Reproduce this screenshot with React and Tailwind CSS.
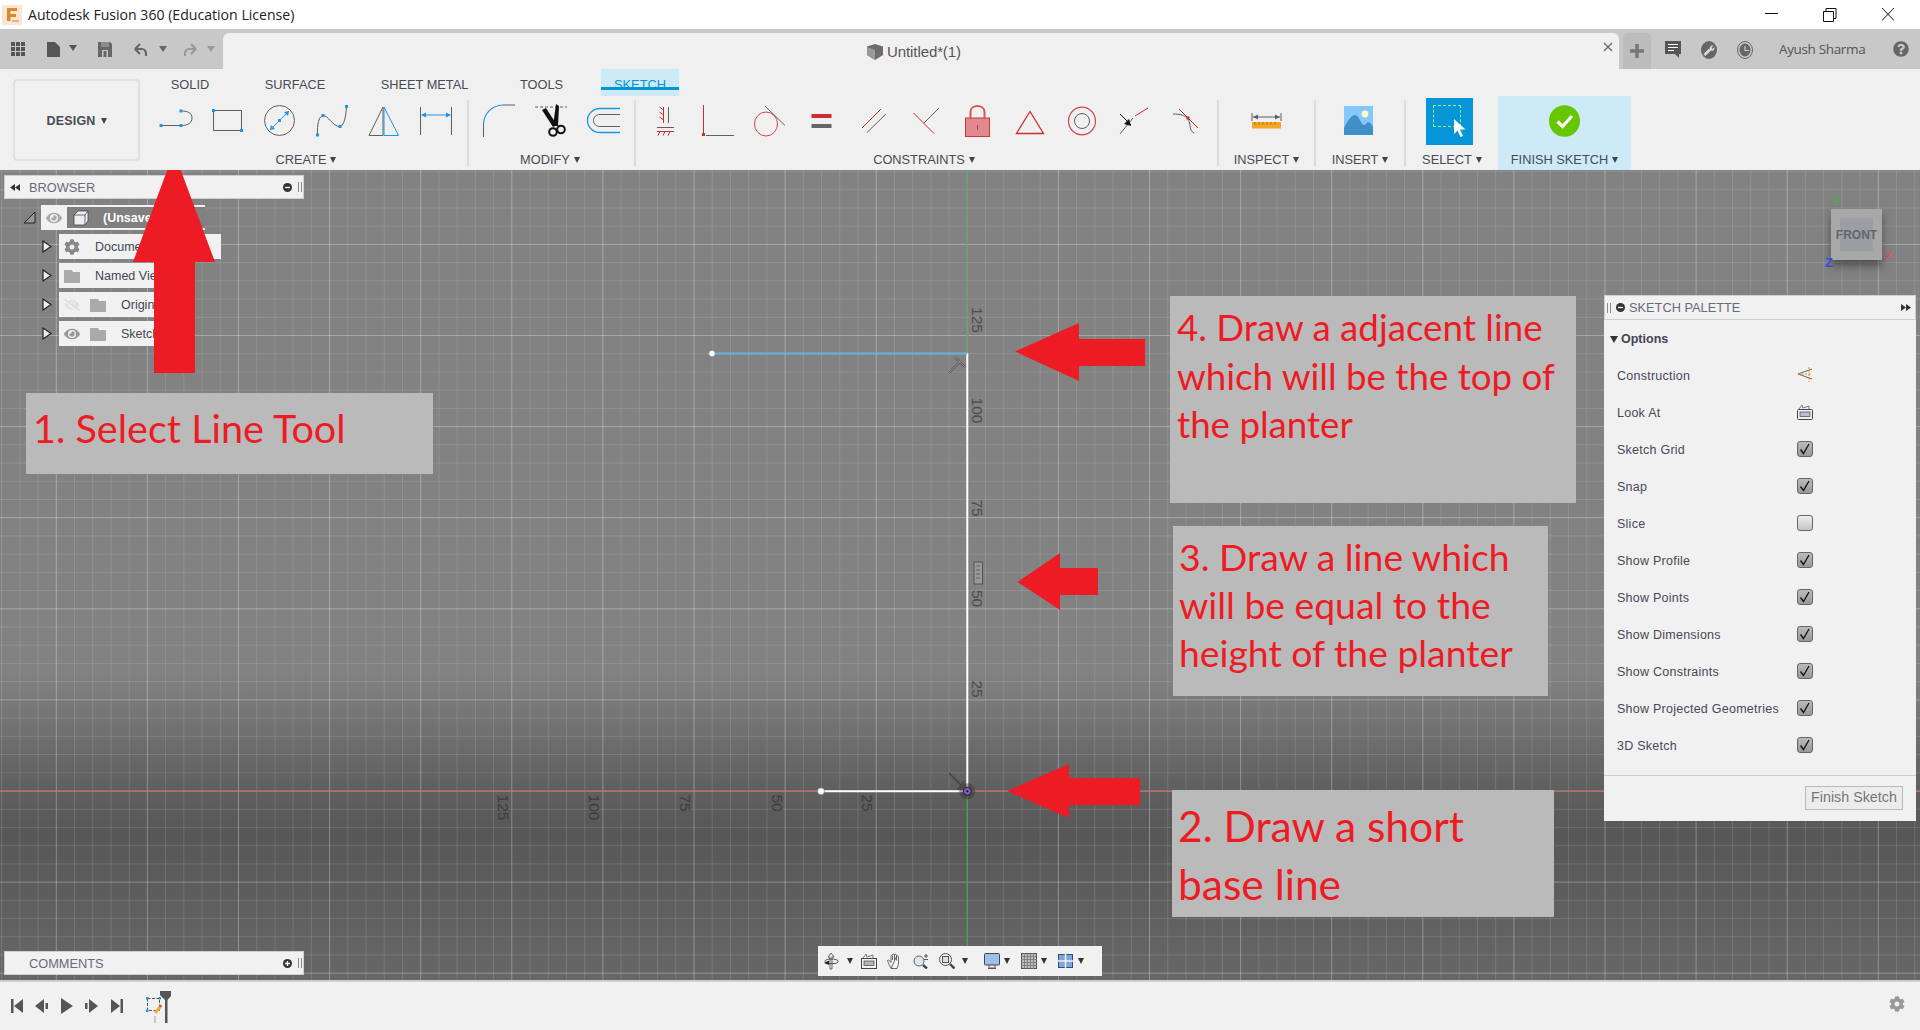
import React from "react";
import { FaCog, FaEye, FaEyeSlash, FaQuestionCircle } from "react-icons/fa";

const RED = "#ed1c24";
const BLUE = "#1e96e6";
const G = "#5f5f5f";
const CR = "#cc2d33";

const Tri = ({ c = "border-t-[#444]" }) => (
  <span className={`inline-block w-0 h-0 border-x-[3.5px] border-x-transparent border-t-[6px] ${c}`} />
);

const Sq = ({ x, y }) => <rect x={x - 1.5} y={y - 1.5} width="3" height="3" fill={BLUE} />;

const Slot = ({ x, w = 52, children }) => (
  <svg width={w} height="44" viewBox={`${x} 96 ${w} 44`} className="shrink-0" fill="none">
    {children}
  </svg>
);

const CreateIcons = () => (
  <>
    <Slot x={150}>
      <path d="M161 125.5H181" stroke={G} />
      <path d="M181 111C188 111 192 113 192 118C192 123 188 125.5 181 125.5" stroke={G} />
      <Sq x={161} y={125.5} /><Sq x={181} y={125.5} /><Sq x={181} y={111} />
    </Slot>
    <Slot x={202}>
      <rect x="213.5" y="110.5" width="28" height="20" stroke={G} />
      <Sq x={213.5} y={110.5} /><Sq x={241.5} y={130.5} />
    </Slot>
    <Slot x={254}>
      <ellipse cx="279.5" cy="120.5" rx="15" ry="15" stroke={G} />
      <path d="M270 130L289 111" stroke={BLUE} />
      <path d="M289 111l-5 1l4 4zM270 130l5-1l-4-4z" fill={BLUE} />
      <Sq x={279.5} y={120.5} />
    </Slot>
    <Slot x={306}>
      <path d="M317.5 135C317 124 319 116 323 115.5C328 115 333 127 340 126.5C344 126 346 116 346.5 107" stroke={G} />
      <Sq x={317.5} y={135} /><Sq x={323} y={115.5} /><Sq x={340} y={126.5} /><Sq x={346.5} y={106.5} />
    </Slot>
    <Slot x={358}>
      <path d="M383 107L369 135.5H383Z" stroke={G} />
      <path d="M384 107V135.5H398.5Z" stroke={BLUE} />
    </Slot>
    <Slot x={410}>
      <path d="M420.5 107V135M451.5 107V135" stroke={G} />
      <path d="M422 115H450" stroke={BLUE} />
      <path d="M421 115l5-2.5v5zM451 115l-5-2.5v5z" fill={BLUE} />
    </Slot>
  </>
);

const ModifyIcons = () => (
  <>
    <Slot x={473}>
      <path d="M483.5 124C484 113 492 105.5 503 105" stroke={BLUE} strokeWidth="1.2" />
      <path d="M503 105H515M483.5 124V137" stroke={G} />
    </Slot>
    <Slot x={525}>
      <path d="M535 107H567" stroke={G} strokeDasharray="3 2" />
      <path d="M542 110L553 127L557 125L546 108Z" fill="#111" />
      <path d="M556 104L559 106L558 126L553 126Z" fill="#111" />
      <circle cx="553" cy="132" r="3.8" stroke="#111" strokeWidth="2" />
      <circle cx="561" cy="129.5" r="3.8" stroke="#111" strokeWidth="2" />
    </Slot>
    <Slot x={577}>
      <path d="M620 108.5H600C593 108.5 587.5 114 587.5 120.5C587.5 127 593 132.5 600 132.5H620" stroke={BLUE} strokeWidth="1.3" />
      <path d="M620 114.5H600C596 114.5 593.5 117 593.5 120.5C593.5 124 596 126.5 600 126.5H620" stroke={G} />
    </Slot>
  </>
);

const ConstraintIcons = () => (
  <>
    <Slot x={639}>
      <path d="M668.5 107V123" stroke={G} />
      <path d="M663.5 107V123M663.5 110l-4-3M663.5 115l-4-3M663.5 120l-4-3" stroke={CR} />
      <path d="M657 127.5H674" stroke={G} />
      <path d="M657 131.5H674M660 131.5l-2 4M665 131.5l-2 4M670 131.5l-2 4" stroke={CR} />
    </Slot>
    <Slot x={691}>
      <path d="M703.5 105V134" stroke={CR} />
      <rect x="702" y="133" width="3" height="3" fill={CR} />
      <path d="M706 135.5H734" stroke={G} />
    </Slot>
    <Slot x={743}>
      <ellipse cx="766" cy="124" rx="11.5" ry="12" stroke="#d6474c" />
      <path d="M765 106L785 125.5" stroke={G} />
    </Slot>
    <Slot x={795}>
      <rect x="811.5" y="114" width="20" height="4" fill={CR} />
      <rect x="811.5" y="124" width="20" height="4" fill="#666" />
    </Slot>
    <Slot x={847}>
      <path d="M862 128L881 109" stroke={CR} />
      <path d="M867 132.5L886 114" stroke={G} />
    </Slot>
    <Slot x={899}>
      <path d="M913.5 113L934 133.5" stroke={CR} />
      <path d="M924 123L939 108" stroke={G} />
    </Slot>
    <Slot x={951}>
      <path d="M970.5 118V112C970.5 104 984.5 104 984.5 112V118" stroke="#d0585d" strokeWidth="2" />
      <rect x="965.5" y="118" width="24" height="18.5" fill="#e08a8f" stroke="#c9383e" />
      <path d="M977.5 125V130" stroke="#c9383e" />
    </Slot>
    <Slot x={1003}>
      <path d="M1030 111.5L1016.5 133.5H1043.5Z" stroke={CR} strokeWidth="1.3" />
    </Slot>
    <Slot x={1055}>
      <ellipse cx="1082" cy="121" rx="13.5" ry="13.8" stroke="#d6474c" strokeWidth="1.2" />
      <circle cx="1082" cy="121" r="7.5" stroke={G} />
    </Slot>
    <Slot x={1107}>
      <path d="M1120 134L1133 118" stroke={G} />
      <path d="M1135 116L1148 108" stroke={CR} />
      <path d="M1120 114L1131 125" stroke="#111" />
      <path d="M1131 126l-7-2l5-5z" fill="#111" />
    </Slot>
    <Slot x={1159}>
      <path d="M1179 109L1198 128" stroke={CR} />
      <path d="M1173 114C1180 114 1185 115 1188 119C1191 124 1189 131 1194 133" stroke={G} />
      <rect x="1186.5" y="116.5" width="3" height="3" fill={CR} />
    </Slot>
  </>
);

const Sep = () => <div className="w-[2px] my-[4px] bg-[#dcdcdc] shrink-0" />;

const Label = ({ t, cls = "" }) => (
  <div className={`h-[30px] pt-[10px] flex items-center justify-center gap-[4px] text-[12.8px] text-[#4a4a55] ${cls}`}>
    <span>{t}</span>
    <Tri />
  </div>
);

const Ribbon = () => (
  <div className="h-[101px] flex bg-[#f0f0f0] font-['Liberation_Sans',sans-serif] shrink-0">
    <div className="w-[150px] shrink-0 pl-[13px] pt-[10px]">
      <div className="w-[127px] h-[82px] pt-[2px] rounded-[4px] border-2 border-[#e0e0e0] flex items-center justify-center gap-[5px] text-[12.5px] font-bold text-[#4a4a55] tracking-[0.2px]">
        <span>DESIGN</span>
        <Tri />
      </div>
    </div>
    <div className="flex flex-col flex-1">
      <div className="h-[27px] flex text-[12.8px] text-[#4a4a55] shrink-0">
        <div className="w-[80px] pt-[6px] text-center">SOLID</div>
        <div className="w-[130px] pt-[6px] text-center">SURFACE</div>
        <div className="w-[129px] pt-[6px] text-center">SHEET METAL</div>
        <div className="w-[105px] pt-[6px] text-center">TOOLS</div>
        <div className="ml-[7px] w-[78px] h-[27px] pt-[6px] text-center bg-[#cdeaf7] text-[#0696d7] relative">
          SKETCH
          <div className="absolute left-0 right-0 top-[18px] h-[3px] bg-[#0696d7]" />
        </div>
      </div>
      <div className="flex flex-1">
        <div className="w-[317px] shrink-0">
          <div className="flex h-[44px]"><CreateIcons /></div>
          <Label t="CREATE" cls="pr-[5px]" />
        </div>
        <Sep />
        <div className="w-[165px] shrink-0">
          <div className="flex h-[44px] pl-[4px]"><ModifyIcons /></div>
          <Label t="MODIFY" cls="pr-[3px]" />
        </div>
        <Sep />
        <div className="w-[581px] shrink-0">
          <div className="flex h-[44px] pl-[3px]"><ConstraintIcons /></div>
          <Label t="CONSTRAINTS" cls="pr-[5px]" />
        </div>
        <Sep />
        <div className="w-[95px] shrink-0">
          <div className="flex h-[44px] justify-center">
            <Slot x={1241}>
              <path d="M1252 113V121M1281 113V121M1253 117H1280" stroke={G} />
              <path d="M1253 117l5-2.5v5zM1280 117l-5-2.5v5z" fill={G} />
              <rect x="1252" y="122" width="29" height="6.5" fill="#f5a623" />
              <path d="M1255 122v3M1259 122v3M1263 122v3M1267 122v3M1271 122v3M1275 122v3" stroke="#8a6512" strokeWidth="0.7" />
            </Slot>
          </div>
          <Label t="INSPECT" />
        </div>
        <Sep />
        <div className="w-[88px] shrink-0">
          <div className="flex h-[44px] justify-center">
            <Slot x={1334}>
              <rect x="1344" y="106" width="29" height="29" fill="#85c8fb" />
              <path d="M1344 128C1348 120 1352 115 1355 115C1359 115 1361 125 1364 125C1366 125 1367 122 1368 122C1370 122 1372 125 1373 127V135H1344Z" fill="#3f90c9" />
              <circle cx="1365" cy="114" r="3.4" fill="#ffffc8" />
            </Slot>
          </div>
          <Label t="INSERT" />
        </div>
        <Sep />
        <div className="w-[92px] shrink-0">
          <div className="flex h-[44px] justify-center pt-[2px] pr-[5px]">
            <div className="w-[47px] h-[47px] bg-[#0696d7] relative shrink-0">
              <div className="absolute left-[7px] top-[7px] w-[28px] h-[22px] border border-dashed border-[#a6e67a]" />
              <svg className="absolute left-[27px] top-[20px]" width="14" height="20" viewBox="0 0 14 20">
                <path d="M1 1V16L4.5 12.5L7.5 19L10 18L7 11.5L12.5 11.5Z" fill="#fff" />
              </svg>
            </div>
          </div>
          <Label t="SELECT" />
        </div>
        <div className="w-[133px] shrink-0 bg-[#cdeaf7]">
          <div className="flex h-[44px] justify-center">
            <Slot x={1539}>
              <ellipse cx="1564.5" cy="121" rx="15.5" ry="15.8" fill="#66c600" />
              <path d="M1557.5 121.5L1562.5 126.5L1572 116" stroke="#fff" strokeWidth="3.2" />
            </Slot>
          </div>
          <Label t="FINISH SKETCH" />
        </div>
      </div>
    </div>
  </div>
);

const TitleBar = () => (
  <div className="h-[29px] bg-white flex items-center shrink-0 relative">
    <svg className="ml-[2px]" width="20" height="20" viewBox="0 0 20 20">
      <rect width="20" height="20" fill="#fbe6d2" />
      <path d="M5 3H15V6H8.5V9H14V12H8.5V16H5Z" fill="#d8882f" />
      <rect x="10" y="15" width="7" height="2" fill="#eeb27b" />
    </svg>
    <span className="ml-[6px] text-[14.1px] text-[#222] font-['Open_Sans',sans-serif]">Autodesk Fusion 360 (Education License)</span>
    <div className="ml-auto flex items-center mr-[4px]">
      <svg width="58" height="29" viewBox="0 0 58 29"><path d="M23 13.5H36" stroke="#111" /></svg>
      <svg width="58" height="29" viewBox="0 0 58 29"><path d="M23.5 11.5H33.5V21.5H23.5ZM26 11V8.5H36V18.5H34" stroke="#111" fill="none" /></svg>
      <svg width="58" height="29" viewBox="0 0 58 29"><path d="M24 8L36 20.500M36 8L24 20.500" stroke="#111" fill="none" /></svg>
    </div>
  </div>
);

const TabStrip = () => (
  <div className="h-[40px] bg-[#c8c8c8] flex shrink-0 font-['Liberation_Sans',sans-serif]">
    <div className="w-[223px] flex items-center shrink-0">
      <svg width="223" height="40" viewBox="0 29 223 40" fill="none">
        <g fill="#555">
          {[0, 1, 2].map((r) => [0, 1, 2].map((c) => <rect key={`${r}${c}`} x={11 + c * 5} y={42 + r * 5} width="4" height="4" />))}
          <path d="M47 42H55L60 47V57H47Z" />
          <path d="M69 45H77L73 51Z" />
          <path d="M98 42H110L112 44V57H98Z" fill="#666" />
          <rect x="101" y="42" width="8" height="5" fill="#8c8c8c" />
          <rect x="102" y="50" width="6" height="7" fill="#c8c8c8" />
          <rect x="103.500" y="51" width="3" height="6" fill="#666" />
          <path d="M159 46H167L163 52Z" fill="#666" />
          <path d="M207 46H215L211 52Z" fill="#999" />
        </g>
        <path d="M135 49L140 44M135 49L140 54M135 49H142C145 49 146.500 52 146 56" stroke="#666" strokeWidth="2.2" />
        <path d="M196 49L191 44M196 49L191 54M196 49H189C186 49 184.500 52 185 56" stroke="#999" strokeWidth="2.2" />
      </svg>
    </div>
    <div className="w-[1396px] mt-[4px] bg-[#f0f0f0] rounded-t-[6px] relative flex justify-center items-center shrink-0">
      <div className="flex items-center gap-[4px] mr-[14px] mt-[1px]">
        <svg width="16" height="16" viewBox="0 0 16 16">
          <path d="M8 0L16 2.500V11L8 16L0 11V2.500Z" fill="#6c6c6c" />
          <path d="M0 3L8 6V16L0 11Z" fill="#9a9a9a" />
        </svg>
        <span className="text-[15px] leading-[18px] text-[#555] tracking-[-0.1px]">Untitled*(1)</span>
      </div>
      <svg className="absolute left-[1380px] top-[9px]" width="10" height="10" viewBox="0 0 10 10"><path d="M1 1L9 9M9 1L1 9" stroke="#666" strokeWidth="1.3" /></svg>
    </div>
    <div className="ml-[4px] mt-[4px] w-[28px] bg-[#bcbcbc] rounded-t-[5px] flex items-center justify-center shrink-0">
      <svg width="14" height="14" viewBox="0 0 14 14"><path d="M7 0V14M0 7H14" stroke="#777" strokeWidth="3.5" /></svg>
    </div>
    <svg className="ml-[14px] mt-[12px]" width="16" height="18" viewBox="0 0 16 18">
      <path d="M0 0H16V13H14V17L10 13H0Z" fill="#555" />
      <path d="M3 3.500H13M3 6.500H13M3 9.500H9" stroke="#fff" strokeWidth="1.2" />
    </svg>
    <svg className="ml-[20px] mt-[12px]" width="16" height="18" viewBox="0 0 16 18" fill="none">
      <ellipse cx="8" cy="9" rx="8" ry="9" fill="#666" />
      <path d="M3.500 14L9 8.500" stroke="#ddd" strokeWidth="2.6" />
      <path d="M9 9C8 6 10 4 12.500 4.500L10.500 6.800L11.500 8L13.500 6C14 9 11.500 11 9 9Z" fill="#ddd" />
    </svg>
    <svg className="ml-[20px] mt-[12px]" width="16" height="18" viewBox="0 0 16 18" fill="none">
      <ellipse cx="8" cy="9" rx="7.500" ry="8.500" stroke="#666" />
      <ellipse cx="8" cy="9" rx="5.500" ry="6.500" fill="#666" />
      <path d="M8 5V9.500H12" stroke="#ccc" strokeWidth="1.2" />
    </svg>
    <span className="ml-[26px] mt-[12px] w-[86px] text-[13.5px] leading-[16px] whitespace-nowrap text-[#555] font-['Open_Sans',sans-serif] tracking-[-0.35px]">Ayush Sharma</span>
    <FaQuestionCircle className="ml-[28px] mt-[12px] text-[#666]" size={16} />
  </div>
);

const Canvas = () => {
  const cx = 967.3, cy = 791, st = 18.22;
  const xs = [], ys = [];
  for (let i = -54; i < 54; i++) xs.push(i);
  for (let i = -34; i < 12; i++) ys.push(i);
  const labelV = [["125", 320], ["100", 410.5], ["75", 508], ["50", 598.500], ["25", 689]];
  const labelH = [["125", 498], ["100", 588.500], ["75", 680], ["50", 771.500], ["25", 861.500]];
  return (
    <svg className="absolute inset-0" width="1920" height="810" viewBox="0 170 1920 810" fill="none">
      {xs.map((i) => (
        <line key={`x${i}`} x1={cx + i * st} x2={cx + i * st} y1="170" y2="980"
          stroke="#fff" strokeOpacity={i % 5 === 0 ? 0.3 : 0.13} />
      ))}
      {ys.map((i) => (
        <line key={`y${i}`} y1={cy + i * st} y2={cy + i * st} x1="0" x2="1920"
          stroke="#fff" strokeOpacity={i % 5 === 0 ? 0.3 : 0.13} />
      ))}
      <line x1="0" x2="1920" y1="791.3" y2="791.3" stroke="#cf6a6a" />
      <line x1="967.3" x2="967.3" y1="170" y2="353" stroke="#4fae4f" />
      <line x1="967.3" x2="967.3" y1="791" y2="980" stroke="#2fb52f" />
      <line x1="967.3" x2="967.3" y1="353" y2="791" stroke="#fff" strokeWidth="2" />
      <line x1="712" x2="967.3" y1="353.500" y2="353.500" stroke="#63b5dc" strokeWidth="2" />
      <line x1="821" x2="967.3" y1="791.3" y2="791.3" stroke="#fff" strokeWidth="2" />
      <circle cx="712" cy="353.500" r="3.300" fill="#fff" stroke="#666" strokeWidth="0.6" />
      <circle cx="821" cy="791.300" r="3.500" fill="#fff" stroke="#666" strokeWidth="0.6" />
      <circle cx="967.300" cy="791.300" r="8" fill="#333" fillOpacity="0.45" />
      <circle cx="967.300" cy="791.300" r="4" fill="#7a5cc4" stroke="#222" />
      <circle cx="967.300" cy="791.300" r="1" fill="#111" />
      <path d="M949 373L960 361.500M955 357.500L965 367" stroke="#555" strokeWidth="2.200" />
      <path d="M949 373L960 361.500M955 357.500L965 367" stroke="#aaa" strokeWidth="0.800" />
      <path d="M949 773L962 786M958 790L964 781" stroke="#444" strokeWidth="1.500" />
      <rect x="974" y="562" width="8.500" height="22" fill="#999" stroke="#555" />
      <path d="M976 566h4M976 570h4M976 574h4M976 578h4" stroke="#555" strokeWidth="0.800" />
      {labelV.map(([t, y]) => (
        <text key={t} transform={`translate(972 ${y}) rotate(90)`} textAnchor="middle" fontSize="15.500"
          fontFamily="'Liberation Sans',sans-serif" fill="#4c4c4c">{t}</text>
      ))}
      {labelH.map(([t, x]) => (
        <text key={t} transform={`translate(${x} ${t.length === 3 ? 807.5 : 803}) rotate(90)`} textAnchor="middle" fontSize="15.500"
          fontFamily="'Liberation Sans',sans-serif" fill="#3c3c3c">{t}</text>
      ))}
      <path d="M1015 351.500L1079 323V339H1145V366H1079V381Z" fill={RED} />
      <path d="M1017.500 582L1060 553V568H1098V595H1060V610Z" fill={RED} />
      <path d="M1007 791L1069 764V778H1140V805H1069V818Z" fill={RED} />
    </svg>
  );
};

const ViewCube = () => (
  <div className="absolute left-[1825px] top-[22px] w-[75px] h-[90px]">
    <div className="absolute left-[6px] top-[17px] w-[51px] h-[51px] bg-[#a8a8a8] shadow-[0_6px_8px_rgba(40,40,40,0.55)]">
      <div className="mx-[9px] my-[9px] w-[33px] h-[33px] bg-[#9b9ea3] flex items-center justify-center text-[12px] font-bold text-[#666] font-['Liberation_Sans',sans-serif] whitespace-nowrap">
        FRONT
      </div>
    </div>
    <span className="absolute left-[7px] top-[2px] text-[12px] leading-[14px] text-[#3fb53f] font-['Liberation_Sans',sans-serif]">Y</span>
    <span className="absolute left-0 top-[64px] text-[13px] leading-[14px] font-bold text-[#3a4ae0] font-['Liberation_Sans',sans-serif]">Z</span>
    <span className="absolute left-[60px] top-[57px] text-[12px] leading-[14px] text-[#e05050] font-['Liberation_Sans',sans-serif]">X</span>
  </div>
);

const PanelHead = ({ left, t, right, cls }) => (
  <div className={`h-[24px] bg-[#f1f1f1] border border-[#cfcfcf] flex items-center font-['Liberation_Sans',sans-serif] text-[12.8px] text-[#6a6a7a] ${cls}`}>
    {left}
    <span className="pt-[1px]">{t}</span>
    {right}
  </div>
);

const Rew = ({ flip }) => (
  <svg width="10" height="7" viewBox="0 0 10 7" className={flip ? "rotate-180" : ""}><path d="M5 0V7L0 3.500ZM10 0V7L5 3.500Z" fill="#333" /></svg>
);

const Round = ({ plus }) => (
  <svg width="9" height="9" viewBox="0 0 9 9">
    <circle cx="4.500" cy="4.500" r="4.500" fill="#333" />
    <path d={plus ? "M2 4.500H7M4.500 2V7" : "M2 4.500H7"} stroke="#fff" strokeWidth="1.300" />
  </svg>
);

const Grip = () => <div className="w-[4px] h-[10px] border-x border-[#888]" />;

const Folder = () => (
  <svg width="16" height="13" viewBox="0 0 16 13"><path d="M0 0H8L9 2H16V13H0Z" fill="#aaa" /></svg>
);

const Expand = () => (
  <svg width="10" height="13" viewBox="0 0 10 13"><path d="M1 1L9 6.500L1 12Z" fill="#eee" stroke="#222" strokeWidth="1.200" /></svg>
);

const TreeRow = ({ w, children }) => (
  <div className="flex items-center h-[25px] mb-[4px]">
    <div className="w-[18px] pl-[1px] flex items-center"><Expand /></div>
    <div className={`h-[25px] pt-[1px] bg-[#f1f1f1] flex items-center text-[12.5px] text-[#444455] ${w}`}>{children}</div>
  </div>
);

const Browser = () => (
  <div className="absolute left-[4px] top-[5px] w-[300px] font-['Liberation_Sans',sans-serif]">
    <PanelHead
      t="BROWSER"
      left={<div className="w-[24px] pl-[5px] flex"><Rew /></div>}
      right={<div className="ml-auto flex items-center gap-[6px] pr-[1px]"><Round /><Grip /></div>}
    />
    <div className="mt-[6px] pl-[19px]">
      <div className="flex items-center h-[25px] mb-[4px]">
        <svg width="18" height="13" viewBox="0 0 18 13"><path d="M1 12L12 1V12Z" fill="#999" stroke="#222" /></svg>
        <div className="h-[25px] w-[164px] bg-[#f1f1f1] flex items-center">
          <FaEye className="ml-[5px] text-[#aaa]" size={16} />
          <div className="ml-[5px] flex-1 h-[21px] pt-[1px] bg-[#808080] flex items-center pl-[6px] text-[12.5px] font-bold text-white">
            <svg width="16" height="16" viewBox="0 0 16 16" className="mr-[14px]"><path d="M1 5H12V15H1ZM1 5L5 1H15V11L12 15M12 5L15 1" fill="#eceef4" stroke="#444" strokeWidth="0.800" /></svg>
            (Unsaved)
          </div>
        </div>
      </div>
      <div className="pl-[18px]">
        <TreeRow w="w-[162px]">
          <FaCog className="ml-[5px] mr-[15px] text-[#888]" size={16} /><span>Document Settings</span>
        </TreeRow>
        <TreeRow w="w-[128px]">
          <span className="ml-[5px] mr-[15px]"><Folder /></span><span>Named Views</span>
        </TreeRow>
        <TreeRow w="w-[118px]">
          <FaEyeSlash className="ml-[5px] text-[#ddd]" size={16} /><span className="ml-[10px] mr-[15px]"><Folder /></span><span>Origin</span>
        </TreeRow>
        <TreeRow w="w-[118px]">
          <FaEye className="ml-[5px] text-[#999]" size={16} /><span className="ml-[10px] mr-[15px]"><Folder /></span><span>Sketches</span>
        </TreeRow>
      </div>
    </div>
  </div>
);

const Check = ({ on }) => (
  <div className={`w-[16px] h-[16px] rounded-[3px] border border-[#666] ${on ? "bg-[linear-gradient(#bbb,#999)]" : "bg-[linear-gradient(#eee,#c4c4c4)]"}`}>
    {on && (
      <svg width="14" height="14" viewBox="0 0 14 14" fill="none">
        <path d="M2.500 7.500L5.500 11.500L11 2" stroke="#111" strokeWidth="1.300" />
      </svg>
    )}
  </div>
);

const PalRow = ({ t, children }) => (
  <div className="h-[37px] flex items-center pl-[13px] text-[12.5px] tracking-[0.25px] text-[#484858]">
    <span className="w-[180px] pt-[1px]">{t}</span>
    <div className="w-[16px] flex justify-center -mt-[2px]">{children}</div>
  </div>
);

const Palette = () => (
  <div className="absolute left-[1604px] top-[125px] w-[312px] h-[526px] bg-[#f1f1f1] font-['Liberation_Sans',sans-serif] flex flex-col">
    <PanelHead
      t="SKETCH PALETTE"
      cls="h-[25px]"
      left={<div className="flex items-center gap-[5px] pl-[2px] pr-[4px]"><Grip /><Round /></div>}
      right={<div className="ml-auto pr-[4px]"><Rew flip /></div>}
    />
    <div className="h-[37px] pt-[2px] flex items-center pl-[6px] gap-[3px] text-[12.5px] font-bold text-[#444455]">
      <span className="inline-block w-0 h-0 border-x-[4.5px] border-x-transparent border-t-[7px] border-t-[#333]" />
      Options
    </div>
    <PalRow t="Construction">
      <svg width="16" height="16" viewBox="0 0 16 16" fill="none">
        <path d="M1 7L15 2M1 7L15 12" stroke="#666" />
        <path d="M1 7H15M12 0V15" stroke="#f08a00" strokeDasharray="2 1.500" />
      </svg>
    </PalRow>
    <PalRow t="Look At">
      <svg width="16" height="16" viewBox="0 0 16 16" fill="none">
        <rect x="0.500" y="5.500" width="15" height="10" rx="1" stroke="#444" />
        <rect x="3" y="8" width="10" height="4.500" fill="#b8c2d4" stroke="#444" strokeWidth="0.700" />
        <path d="M2 5L5 1L6 4L12 2V5" stroke="#777" />
      </svg>
    </PalRow>
    <PalRow t="Sketch Grid"><Check on /></PalRow>
    <PalRow t="Snap"><Check on /></PalRow>
    <PalRow t="Slice"><Check /></PalRow>
    <PalRow t="Show Profile"><Check on /></PalRow>
    <PalRow t="Show Points"><Check on /></PalRow>
    <PalRow t="Show Dimensions"><Check on /></PalRow>
    <PalRow t="Show Constraints"><Check on /></PalRow>
    <PalRow t="Show Projected Geometries"><Check on /></PalRow>
    <PalRow t="3D Sketch"><Check on /></PalRow>
    <div className="mt-[11px] border-t border-[#ccc] flex justify-end pr-[13px] pt-[10px]">
      <div className="w-[98px] h-[24px] border border-[#bbb] bg-[#ececec] flex items-center justify-center text-[14.3px] text-[#777]">
        Finish Sketch
      </div>
    </div>
  </div>
);

const NavBar = () => (
  <div className="absolute left-[818px] top-[776px] w-[284px] h-[30px] bg-[#f1f1f1] flex items-center">
    <svg className="ml-[5px]" width="16" height="18" viewBox="0 0 16 18" fill="none">
      <path d="M8 1L5 5H7V17H9V5H11Z" stroke="#444" fill="#eee" strokeWidth="0.800" />
      <path d="M3 11C0 8 5 7 8 7C12 7 16 8 15 10C14 12 9 12 3 11" stroke="#444" />
      <path d="M1 11L6 8.500V13Z" fill="#222" />
    </svg>
    <span className="ml-[8px] flex"><Tri c="border-t-[#333]" /></span>
    <svg className="ml-[8px]" width="16" height="16" viewBox="0 0 16 16" fill="none">
      <rect x="0.500" y="5.500" width="15" height="10" stroke="#444" />
      <rect x="3" y="8" width="10" height="4.500" fill="#b0b4bc" stroke="#444" strokeWidth="0.700" />
      <path d="M2 5L5 1L6 4L12 2V5" stroke="#777" />
    </svg>
    <svg className="ml-[10px]" width="16" height="16" viewBox="0 0 16 16" fill="none">
      <path d="M4 15C2 12 1 9 0.500 7.500C1 6.500 2.500 7 4 9.500V3C4 2 5.500 2 5.500 3V7M5.500 2C5.500 0.500 7.500 0.500 7.500 2V7M7.500 2C7.500 1 9.500 1 9.500 2.500V7.500M9.500 3.500C9.500 2.500 11.500 2.500 11.500 4V10C11.500 12 10.500 14 10 15.500H4Z" stroke="#444" fill="#f6f6f6" strokeWidth="0.800" />
    </svg>
    <svg className="ml-[10px]" width="16" height="16" viewBox="0 0 16 16" fill="none">
      <circle cx="6" cy="8" r="5" stroke="#666" fill="#dbe8f2" />
      <path d="M10 12L14 15.500" stroke="#444" strokeWidth="2.400" />
      <path d="M11 3H15M13 1V5M11 6.500H15" stroke="#333" strokeWidth="0.800" />
    </svg>
    <svg className="ml-[10px]" width="16" height="16" viewBox="0 0 16 16" fill="none">
      <circle cx="6.500" cy="6.500" r="6" stroke="#555" fill="#eee" />
      <rect x="3.500" y="3.500" width="6" height="6" stroke="#555" fill="#ddd" />
      <path d="M11 11L15.500 15.500" stroke="#444" strokeWidth="2.400" />
    </svg>
    <span className="ml-[7px] flex"><Tri c="border-t-[#333]" /></span>
    <svg className="ml-[16px]" width="16" height="16" viewBox="0 0 16 16" fill="none">
      <rect x="0.500" y="0.500" width="15" height="11.500" rx="1" stroke="#444" fill="#9fbfe6" />
      <path d="M5 12V15H11V12M4 15.500H12" stroke="#555" />
    </svg>
    <span className="ml-[4px] flex"><Tri c="border-t-[#333]" /></span>
    <svg className="ml-[11px]" width="16" height="16" viewBox="0 0 16 16" fill="none">
      <rect x="0.500" y="0.500" width="15" height="15" fill="#bbb" stroke="#555" />
      <path d="M3.500 0V16M6.500 0V16M9.500 0V16M12.500 0V16M0 3.500H16M0 6.500H16M0 9.500H16M0 12.500H16" stroke="#777" strokeWidth="0.800" />
    </svg>
    <span className="ml-[4px] flex"><Tri c="border-t-[#333]" /></span>
    <svg className="ml-[11px]" width="15" height="14" viewBox="0 0 15 14" fill="none">
      <rect x="0.500" y="0.500" width="14" height="13" fill="#7fa6d8" stroke="#2c4f82" />
      <path d="M7.500 0V14M0 7H15" stroke="#f1f1f1" strokeWidth="1.500" />
    </svg>
    <span className="ml-[5px] flex"><Tri c="border-t-[#333]" /></span>
  </div>
);

const Annot = ({ cls, children }) => (
  <div className={`absolute bg-[#bababa] text-[#ed1c24] font-['Lato',sans-serif] whitespace-pre-line ${cls}`}>
    {children}
  </div>
);

const Viewport = () => (
  <div className="relative h-[810px] shrink-0 overflow-hidden bg-[linear-gradient(to_bottom,#828282_0%,#828282_62%,#606060_76%,#575757_82%,#676767_100%)]">
    <Canvas />
    <ViewCube />
    <Browser />
    <div className="absolute left-[4px] top-[781px] w-[300px]">
      <PanelHead
        t="COMMENTS"
        left={<div className="w-[24px]" />}
        right={<div className="ml-auto flex items-center gap-[6px] pr-[1px]"><Round plus /><Grip /></div>}
      />
    </div>
    <Palette />
    <NavBar />
    <Annot cls="left-[26px] top-[223px] w-[407px] h-[81px] pl-[7px] pt-[11px] text-[39.6px] leading-[48px]">1. Select Line Tool</Annot>
    <Annot cls="left-[1170px] top-[126px] w-[406px] h-[207px] pl-[7px] pt-[7px] text-[36.7px] leading-[48.5px]">{"4. Draw a adjacent line\nwhich will be the top of\nthe planter"}</Annot>
    <Annot cls="left-[1173px] top-[356px] w-[375px] h-[170px] pl-[6px] pt-[7px] text-[37.3px] leading-[48px]">{"3. Draw a line which\nwill be equal to the\nheight of the planter"}</Annot>
    <Annot cls="left-[1172px] top-[620px] w-[382px] h-[127px] pl-[6px] pt-[7px] text-[42.5px] leading-[58px]">{"2. Draw a short\nbase line"}</Annot>
    <svg className="absolute left-[133px] top-[-18px]" width="82" height="221" viewBox="0 0 82 221">
      <path d="M41 0L82 110H62V221H21V110H0Z" fill={RED} />
    </svg>
  </div>
);

const Timeline = () => (
  <div className="h-[50px] border-t-2 border-[#cfcfcf] bg-[#f1f1f1] flex items-center shrink-0 relative">
    <svg className="ml-[11px]" width="160" height="40" viewBox="11 986 160 40" fill="none">
      <g fill="#555">
        <path d="M11 999H13.500V1013H11ZM23 999V1013L14 1006Z" />
        <path d="M35 1006L44 999V1013ZM45.500 1003H48V1009H45.500Z" />
        <path d="M61 998V1014L73 1006Z" />
        <path d="M85 1003H87.500V1009H85ZM89 999V1013L98 1006Z" />
        <path d="M111 999V1013L120 1006ZM120.500 999H123V1013H120.500Z" />
        <path d="M160 991H172V995L167.500 1000V1023H165V1000L160 995Z" />
      </g>
      <rect x="147.500" y="998.500" width="12" height="12" stroke="#555" strokeDasharray="3 1.500" />
      <rect x="146" y="997" width="2.500" height="2.500" fill={BLUE} /><rect x="158.500" y="997" width="2.500" height="2.500" fill={BLUE} /><rect x="146" y="1009.500" width="2.500" height="2.500" fill={BLUE} />
      <path d="M155 1013L160 1007" stroke="#f0b040" strokeWidth="3" />
      <circle cx="160.500" cy="1006" r="1.500" fill="#f05050" />
      <rect x="154" y="1016" width="2" height="7" fill="#ccc" />
    </svg>
    <FaCog className="absolute right-[15px] top-[14px] text-[#999]" size={16} />
  </div>
);

export default function App() {
  return (
    <div className="w-[1920px] h-[1030px] overflow-hidden flex flex-col bg-[#f1f1f1]">
      <TitleBar />
      <TabStrip />
      <Ribbon />
      <Viewport />
      <Timeline />
    </div>
  );
}
